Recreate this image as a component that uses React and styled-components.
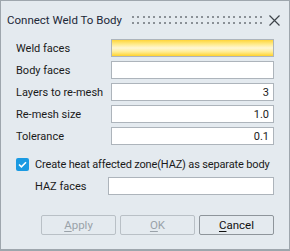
import React from 'react'
import styled, { createGlobalStyle } from 'styled-components'

const Global = createGlobalStyle`
html, body {
    margin: 0;
    padding: 0;
    background: #e4eaef;
}
body {
    font-family: Roboto, "Liberation Sans", sans-serif;
}
`;

const rows = [
    { label: 'Weld faces', value: '', active: true },
    { label: 'Body faces', value: '' },
    { label: 'Layers to re-mesh', value: '3' },
    { label: 'Re-mesh size', value: '1.0' },
    { label: 'Tolerance', value: '0.1' },
];

function Grip() {
    const dots = [];
    for (let i = 0; i < 25; i++) {
        const x = Math.round(i * 5.333);
        dots.push(<rect key={'a' + i} x={x} y={0} width="2" height="2" fill="#8a9096" />);
        dots.push(<rect key={'b' + i} x={x} y={6} width="2" height="2" fill="#8a9096" />);
    }
    return <svg width="130" height="8" viewBox="0 0 130 8">{dots}</svg>;
}

export default function App() {
    return <>
        <Global />
        <Dialog>
            <TitleBar>
                <Title>Connect Weld To Body</Title>
                <GripWrap><Grip /></GripWrap>
                <Close>
                    <svg width="11" height="11" viewBox="0 0 11 11">
                        <path d="M0.5 0.5 L10.5 10.5 M10.5 0.5 L0.5 10.5" stroke="#3e444a" strokeWidth="1.2" />
                    </svg>
                </Close>
            </TitleBar>
            <Form>
                {rows.map(r => (
                    <React.Fragment key={r.label}>
                        <Label>{r.label}</Label>
                        <Field $active={r.active}>{r.value}</Field>
                    </React.Fragment>
                ))}
            </Form>
            <CheckRow>
                <Check>
                    <svg width="9" height="7" viewBox="0 0 9 7">
                        <path d="M1 3.5 L3.4 5.8 L8 1.2" fill="none" stroke="#fff" strokeWidth="1.6" />
                    </svg>
                </Check>
                <CheckText>Create heat affected zone(HAZ) as separate body</CheckText>
            </CheckRow>
            <HazRow>
                <Label>HAZ faces</Label>
                <Field />
            </HazRow>
            <Buttons>
                <Button disabled><u>A</u>pply</Button>
                <Button disabled><u>O</u>K</Button>
                <Button><u>C</u>ancel</Button>
            </Buttons>
        </Dialog>
    </>
}

const Dialog = styled.div`
width: 290px;
height: 251px;
box-sizing: border-box;
border: 1px solid #9ea6ad;
border-bottom-width: 2px;
background: #e4eaef;
display: flex;
flex-direction: column;
color: #1a1a1a;
font-size: 11px;
`;

const TitleBar = styled.div`
height: 37px;
display: flex;
align-items: center;
padding: 0 9px 0 6px;
`;

const Title = styled.div`
font-size: 11.5px;
color: #1c2838;
white-space: nowrap;
`;

const GripWrap = styled.div`
display: flex;
flex-shrink: 0;
margin-top: 1px;
margin-left: auto;
margin-right: 7px;
`;

const Close = styled.div`
display: flex;
flex-shrink: 0;
margin-top: 1px;
`;

const Form = styled.div`
display: grid;
grid-template-columns: 95px 163px;
grid-auto-rows: 18px;
row-gap: 4px;
padding: 1px 15px 0 15px;
`;

const Label = styled.div`
display: flex;
align-items: center;
white-space: nowrap;
`;

const Field = styled.div`
box-sizing: border-box;
height: 18px;
border: 1px solid #adb4bb;
background: ${p => p.$active
    ? 'linear-gradient(#ffd53a 0%, #ffea88 25%, #fff7d6 50%, #ffec90 75%, #ffd22c 100%)'
    : '#ffffff'};
display: flex;
align-items: center;
justify-content: flex-end;
padding-right: 4px;
`;

const CheckRow = styled.div`
display: flex;
align-items: center;
gap: 6px;
margin-top: 12px;
padding-left: 15px;
height: 14px;
`;

const Check = styled.div`
width: 13px;
height: 13px;
border-radius: 2px;
background: #1a9ae2;
display: flex;
align-items: center;
justify-content: center;
`;

const CheckText = styled.div`
white-space: nowrap;
letter-spacing: -0.15px;
`;

const HazRow = styled.div`
display: grid;
grid-template-columns: 73px 166px;
height: 18px;
margin-top: 6px;
padding-left: 34px;
`;

const Buttons = styled.div`
display: flex;
justify-content: flex-end;
gap: 4px;
padding-right: 15px;
margin-top: 20px;
`;

const Button = styled.button`
width: 75px;
height: 20px;
box-sizing: border-box;
border: 1px solid ${p => p.disabled ? '#b9c0c6' : '#8e959b'};
border-radius: 2px;
background: #e4eaef;
color: ${p => p.disabled ? '#9aa2a9' : '#111'};
font-family: inherit;
font-size: 11.5px;
padding: 0;
u { text-decoration-thickness: 1px; text-underline-offset: 2px; }
`;
